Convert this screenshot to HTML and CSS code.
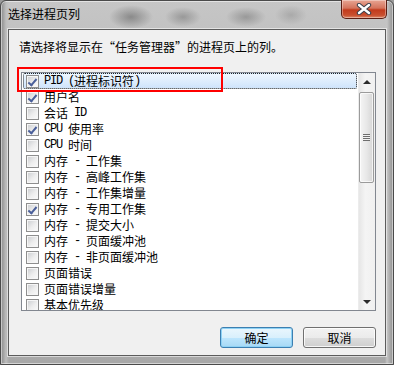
FILE: index.html
```html
<!DOCTYPE html>
<html lang="zh-CN">

<head>
    <meta charset="UTF-8">
    <title>选择进程页列</title>
    <link rel="stylesheet" href="styles.css">
</head>

<body>
    <div class="window">
        <div class="titlebar">
            <span class="title">选择进程页列</span>
            <div class="close-btn">
                <svg width="16" height="12" viewBox="0 0 16 12">
                    <path d="M3 2 L13 10 M13 2 L3 10" stroke="#3b3f4a" stroke-width="4.4" stroke-linecap="round" fill="none"/>
                    <path d="M3 2 L13 10 M13 2 L3 10" stroke="#ffffff" stroke-width="2.4" stroke-linecap="round" fill="none"/>
                </svg>
            </div>
        </div>
        <div class="client">
            <p class="prompt">请选择将显示在“任务管理器”的进程页上的列。</p>
            <div class="list-wrap">
                <div class="list">
                    <div class="items">
                        <div class="item selected"><span class="check checked"></span><span class="en">PID (</span>进程标识符<span class="en">)</span></div>
                        <div class="item"><span class="check checked"></span>用户名</div>
                        <div class="item"><span class="check"></span>会话<span class="en"> ID</span></div>
                        <div class="item"><span class="check checked"></span><span class="en">CPU </span>使用率</div>
                        <div class="item"><span class="check"></span><span class="en">CPU </span>时间</div>
                        <div class="item"><span class="check"></span>内存<span class="en"> - </span>工作集</div>
                        <div class="item"><span class="check"></span>内存<span class="en"> - </span>高峰工作集</div>
                        <div class="item"><span class="check"></span>内存<span class="en"> - </span>工作集增量</div>
                        <div class="item"><span class="check checked"></span>内存<span class="en"> - </span>专用工作集</div>
                        <div class="item"><span class="check"></span>内存<span class="en"> - </span>提交大小</div>
                        <div class="item"><span class="check"></span>内存<span class="en"> - </span>页面缓冲池</div>
                        <div class="item"><span class="check"></span>内存<span class="en"> - </span>非页面缓冲池</div>
                        <div class="item"><span class="check"></span>页面错误</div>
                        <div class="item"><span class="check"></span>页面错误增量</div>
                        <div class="item"><span class="check"></span>基本优先级</div>
                    </div>
                    <div class="scrollbar">
                        <div class="arrow"><span class="tri up"></span></div>
                        <div class="track">
                            <div class="thumb"><span class="grip"></span></div>
                        </div>
                        <div class="arrow"><span class="tri down"></span></div>
                    </div>
                </div>
                <!-- 红色标注框 -->
                <div class="mark"></div>
            </div>
            <div class="buttons">
                <button class="btn btn-default">确定</button>
                <button class="btn">取消</button>
            </div>
        </div>
    </div>
</body>

</html>
```

FILE: styles.css
```css
* {
    margin: 0;
    padding: 0;
    box-sizing: border-box;
}

body {
    width: 394px;
    height: 365px;
    overflow: hidden;
    background: #9a9a9a;
    font-family: "Noto Sans CJK SC", sans-serif;
    font-size: 12px;
    color: #000;
}

.window {
    width: 394px;
    height: 365px;
    display: flex;
    flex-direction: column;
    padding: 0 7px 8px 7px;
    border: 1px solid #4a4a4a;
    border-radius: 6px 6px 0 0;
    background:
        radial-gradient(ellipse 22px 12px at 130px 16px, rgba(90, 90, 90, .55), transparent),
        radial-gradient(ellipse 18px 10px at 182px 16px, rgba(100, 100, 100, .45), transparent),
        radial-gradient(ellipse 20px 10px at 245px 16px, rgba(100, 100, 100, .45), transparent),
        radial-gradient(ellipse 16px 10px at 290px 14px, rgba(120, 120, 120, .35), transparent),
        linear-gradient(to right, #8a8a8a 0px, #bdbdbd 5px, transparent 8px),
        linear-gradient(to left, #8f8f8f 0px, #c4c4c4 6px, transparent 8px),
        linear-gradient(to bottom, #c6c6c6, #b2b2b2 40%, #a8a8a8 100%);
    box-shadow: inset 0 0 0 1px rgba(255, 255, 255, .5);
}

.titlebar {
    height: 28px;
    display: flex;
    align-items: flex-start;
}

.title {
    padding: 5px 0 0 0;
    line-height: 16px;
    color: #000;
}

.close-btn {
    margin-left: auto;
    margin-top: -1px;
    margin-right: -1px;
    width: 46px;
    height: 19px;
    display: flex;
    align-items: center;
    justify-content: center;
    border: 1px solid #5a1e14;
    border-top: none;
    border-radius: 0 0 5px 5px;
    background: linear-gradient(to bottom, #e8a593 0%, #d4735c 45%, #c23a1c 55%, #c9502f 85%, #dd8a6a 100%);
    box-shadow: inset 0 0 0 1px rgba(255, 255, 255, .35);
}

.client {
    flex: 1;
    display: flex;
    flex-direction: column;
    padding: 9px 10px 0 10px;
    background: #f0f0f0;
    border: 1px solid #5c5c5c;
    box-shadow: 0 0 0 1px rgba(255, 255, 255, .55);
}

.prompt {
    line-height: 16px;
}

.list-wrap {
    position: relative;
    margin: 17px 0 0 2px;
    width: 355px;
}

.list {
    height: 239px;
    display: flex;
    border: 1px solid #828790;
    background: #fff;
    overflow: hidden;
}

.items {
    flex: 1;
    padding: 0 1px;
}

.item {
    height: 16px;
    line-height: 16px;
    display: flex;
    align-items: center;
    padding-left: 3px;
    white-space: pre;
}

/* 半角字符按宋体宽度收紧 */
.en {
    font-family: "Liberation Mono", monospace;
    letter-spacing: -1.2px;
    white-space: pre;
}

.item.selected {
    padding-left: 2px;
    border: 1px dotted #222;
    border-radius: 2px;
    background: linear-gradient(to bottom, #eef6fe, #cfe4fb);
}

.check {
    width: 13px;
    height: 13px;
    margin-right: 5px;
    border: 1px solid #8e8e8e;
    background: linear-gradient(135deg, #c9cbcf 0%, #eeeeee 55%, #fbfbfb 100%);
    box-shadow: inset 0 0 0 1px #f6f6f6;
    position: relative;
}

.check.checked::after {
    content: "";
    position: absolute;
    left: 3px;
    top: 1px;
    width: 3px;
    height: 7px;
    border-right: 2px solid #4a5f9a;
    border-bottom: 2px solid #4a5f9a;
    transform: rotate(40deg);
}

.scrollbar {
    width: 17px;
    display: flex;
    flex-direction: column;
    background: linear-gradient(to right, #e6e6e6, #f4f4f4 40%, #f0f0f0);
    border-left: 1px solid #ececec;
}

.arrow {
    height: 17px;
    display: flex;
    align-items: center;
    justify-content: center;
}

.tri {
    width: 0;
    height: 0;
    border-left: 4px solid transparent;
    border-right: 4px solid transparent;
}

.tri.up {
    border-bottom: 4px solid #2b2b2b;
}

.tri.down {
    border-top: 4px solid #2b2b2b;
}

.track {
    flex: 1;
    padding-top: 2px;
}

.thumb {
    width: 15px;
    height: 91px;
    display: flex;
    align-items: center;
    justify-content: center;
    border: 1px solid #9b9b9b;
    border-radius: 2px;
    background: linear-gradient(to right, #f5f5f5, #e8e8e8 50%, #d6d6d6);
    box-shadow: inset 0 0 0 1px rgba(255, 255, 255, .7);
}

.grip {
    width: 7px;
    height: 7px;
    background: repeating-linear-gradient(to bottom, #6e6e6e 0px, #6e6e6e 1px, #f2f2f2 1px, #f2f2f2 2px);
}

.mark {
    position: absolute;
    left: -4px;
    top: -5px;
    width: 206px;
    height: 25px;
    border: 2px solid #ff0000;
}

.buttons {
    margin: 16px 0 0 2px;
    width: 355px;
    display: flex;
    justify-content: flex-end;
    gap: 10px;
}

.btn {
    width: 73px;
    height: 21px;
    font-family: "Noto Sans CJK SC", sans-serif;
    font-size: 12px;
    line-height: 17px;
    color: #000;
    border: 1px solid #707070;
    border-radius: 3px;
    background: linear-gradient(to bottom, #f2f2f2 0%, #ebebeb 50%, #dddddd 51%, #cfcfcf 100%);
    box-shadow: inset 0 0 0 1px rgba(255, 255, 255, .8);
}

.btn-default {
    border-color: #3c7fb1;
    background: linear-gradient(to bottom, #eaf6fd 0%, #d9f0fc 50%, #bee6fd 51%, #a7d9f5 100%);
    box-shadow: inset 0 0 0 1px #8ed2f5;
}
```
